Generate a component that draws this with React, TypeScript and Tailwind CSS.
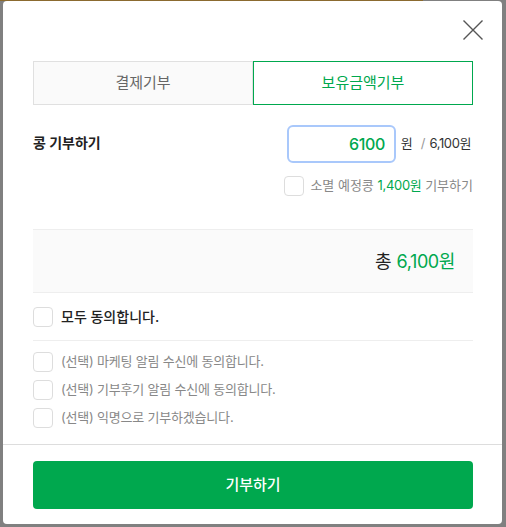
import { useState } from 'react';

// Pretendard-like stack: Latin/digits from Inter, Hangul from Noto CJK KR
const FONT = { fontFamily: 'Inter, "Noto Sans CJK KR", "Noto Sans", sans-serif' };

function Check({ checked, onChange }: { checked: boolean; onChange: () => void }) {
  return (
    <button
      type="button"
      onClick={onChange}
      className={`w-5 h-5 shrink-0 rounded-[4px] border ${checked ? 'bg-[#00a84e] border-[#00a84e]' : 'bg-white border-[#dddddd]'}`}
    />
  );
}

export default function App() {
  const [tab, setTab] = useState<'pay' | 'hold'>('hold');
  const [amount, setAmount] = useState('6100');
  const [expiring, setExpiring] = useState(false);
  const [opts, setOpts] = useState([false, false, false]);

  const allChecked = opts.every(Boolean);
  const toggleAll = () => setOpts(opts.map(() => !allChecked));
  const toggle = (i: number) => setOpts(opts.map((v, j) => (j === i ? !v : v)));

  const options = [
    '(선택) 마케팅 알림 수신에 동의합니다.',
    '(선택) 기부후기 알림 수신에 동의합니다.',
    '(선택) 익명으로 기부하겠습니다.',
  ];

  return (
    <div className="w-[506px] h-[527px] bg-[#808080] overflow-hidden" style={FONT}>
      <div className="h-px w-[423px] bg-[#8b6a2f]" />
      <div className="ml-[3px] w-[499px] h-[523px] bg-white rounded-[4px] flex flex-col">
        {/* header */}
        <div className="h-[60px] flex justify-end pt-[18px] pr-[18px]">
          <button type="button" className="w-[22px] h-[22px] flex items-center justify-center">
            <svg width="22" height="22" viewBox="0 0 22 22" fill="none" stroke="#555" strokeWidth="1.4">
              <path d="M1.5 1.5 L20.5 20.5 M20.5 1.5 L1.5 20.5" />
            </svg>
          </button>
        </div>

        <div className="pl-[30px] pr-[29px] flex flex-col">
          {/* tabs */}
          <div className="grid grid-cols-2 h-[44px]">
            <button
              type="button"
              onClick={() => setTab('pay')}
              className={`text-[15px] ${tab === 'pay' ? 'border border-[#00a84e] text-[#00a84e] bg-white' : 'border border-[#e0e0e0] text-[#666666] bg-[#fafafa]'}`}
            >
              결제기부
            </button>
            <button
              type="button"
              onClick={() => setTab('hold')}
              className={`text-[15px] ${tab === 'hold' ? 'border border-[#00a84e] text-[#00a84e] bg-white' : 'border border-[#e0e0e0] text-[#666666] bg-[#fafafa]'}`}
            >
              보유금액기부
            </button>
          </div>

          {/* amount */}
          <div className="mt-[20px] flex justify-between items-start">
            <span className="mt-[7px] text-[14px] font-bold text-[#222222]">콩 기부하기</span>
            <div className="flex flex-col items-end">
              <div className="flex items-center">
                <input
                  value={amount}
                  onChange={(e) => setAmount(e.target.value)}
                  className="w-[109px] h-[38px] rounded-[6px] border-2 border-[#a9c8fb] text-right pr-[9px] text-[16px] font-medium tracking-[-0.4px] text-[#00a84e] outline-none caret-[#222222]"
                />
                <span className="ml-[5px] text-[13px] text-[#333333]">원</span>
                <span className="ml-[8px] text-[13px] text-[#999999]">/</span>
                <span className="ml-[4px] mr-[2px] text-[13px] text-[#333333] tracking-[-0.4px]">6,100원</span>
              </div>
              <div className="mt-[13px] flex items-center gap-[6px] self-start">
                <Check checked={expiring} onChange={() => setExpiring(!expiring)} />
                <span className="text-[13px] text-[#888888]">
                  소멸 예정콩 <span className="text-[#00a84e] tracking-[-0.3px]">1,400원</span> 기부하기
                </span>
              </div>
            </div>
          </div>

          {/* total */}
          <div className="mt-[33px] h-[64px] bg-[#fafafa] border-y border-[#eeeeee] flex items-center justify-end pr-[18px]">
            <span className="text-[18px] text-[#222222]">
              총 <span className="text-[#00a84e] tracking-[-0.4px]">6,100원</span>
            </span>
          </div>

          {/* agree all */}
          <div className="h-[48px] flex items-center gap-[8px] border-b border-[#eeeeee]">
            <Check checked={allChecked} onChange={toggleAll} />
            <span className="text-[14px] font-medium text-[#222222]">모두 동의합니다.</span>
          </div>

          <div className="pt-[11px] flex flex-col gap-[8px]">
            {options.map((t, i) => (
              <div key={t} className="flex items-center gap-[8px]">
                <Check checked={opts[i]} onChange={() => toggle(i)} />
                <span className="text-[13px] text-[#888888] tracking-[-0.2px]">{t}</span>
              </div>
            ))}
          </div>
        </div>

        <div className="mt-[16px] border-t border-[#dddddd] pt-[16px] pl-[30px] pr-[29px]">
          <button
            type="button"
            className="w-full h-[48px] rounded-[4px] bg-[#00a84e] text-white text-[15px] font-medium"
          >
            기부하기
          </button>
        </div>
      </div>
    </div>
  );
}
